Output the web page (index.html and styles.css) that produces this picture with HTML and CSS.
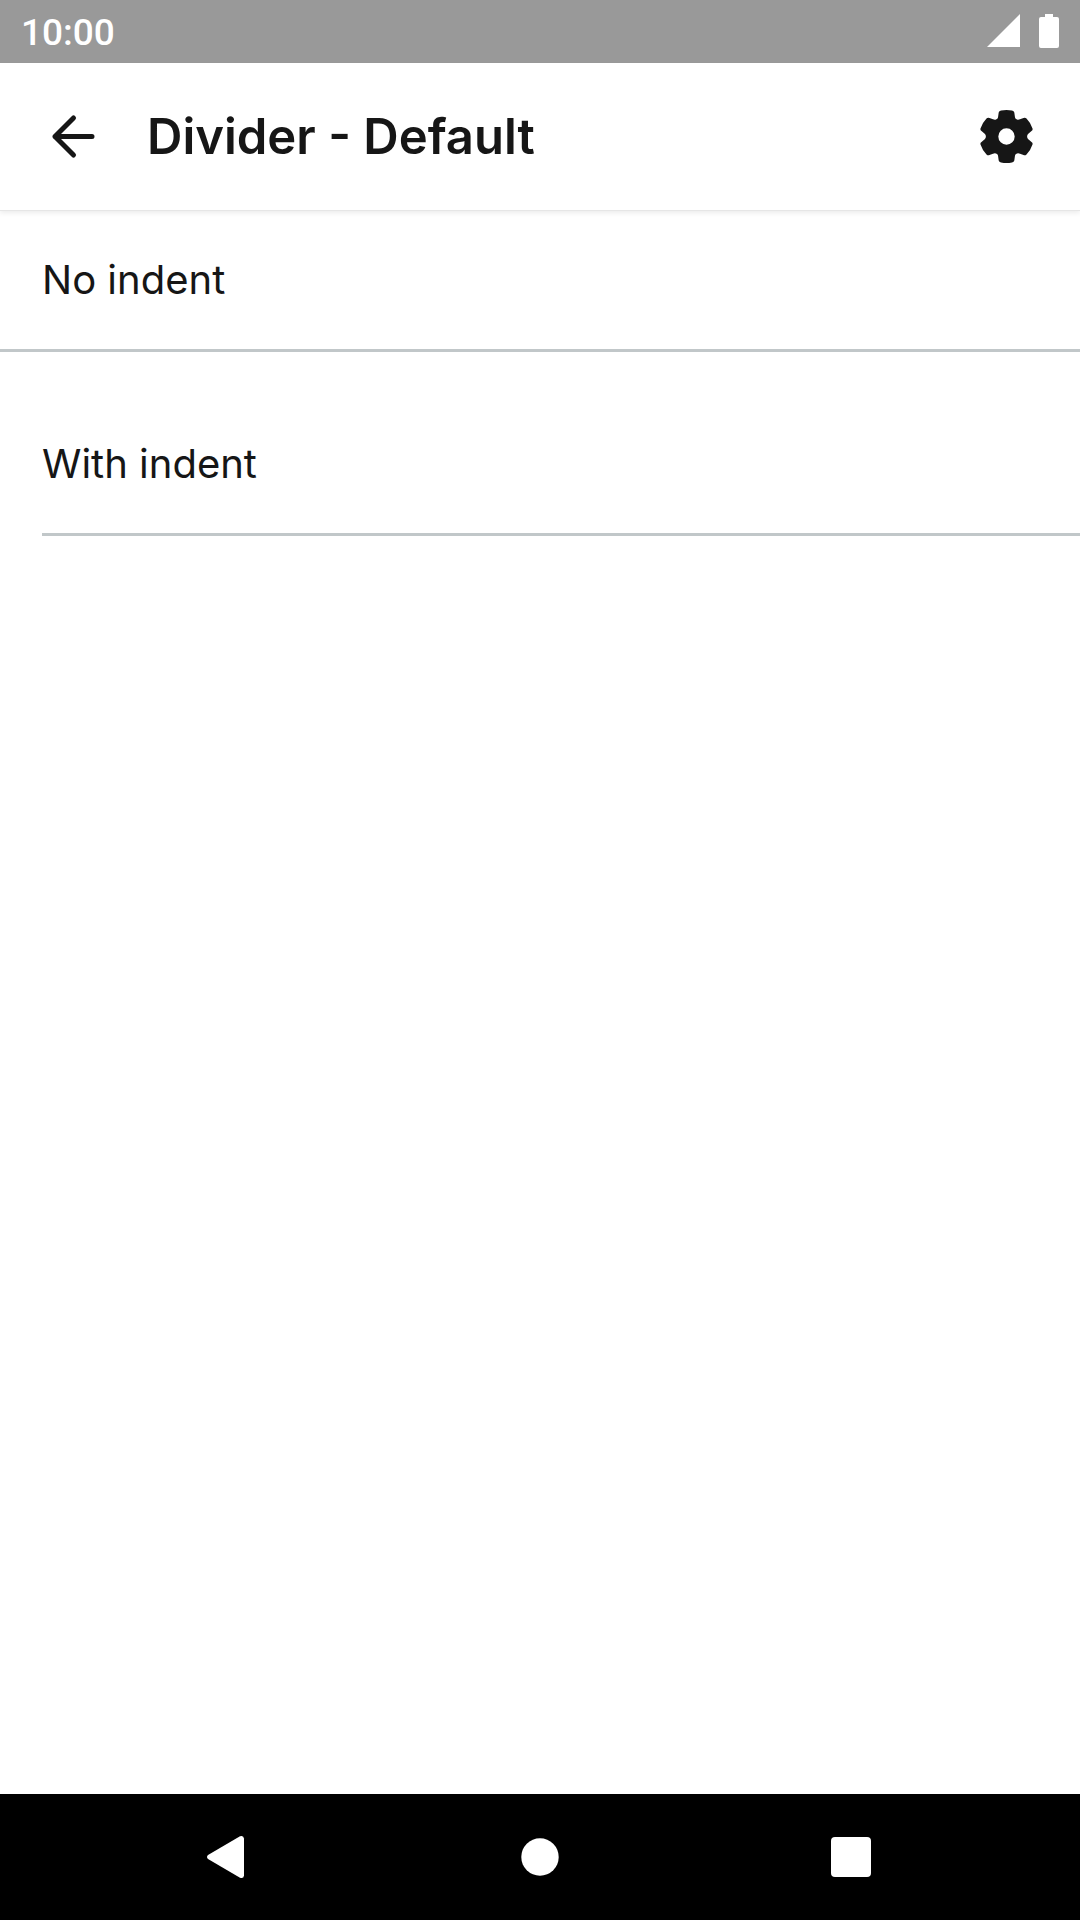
FILE: index.html
```html
<!DOCTYPE html>
<html lang="en">
<head>
<meta charset="utf-8">
<meta name="viewport" content="width=device-width, initial-scale=1">
<title>Divider - Default</title>
<link rel="stylesheet" href="styles.css">
</head>
<body>
<div class="screen">
  <div class="status-bar">
    <time class="clock">10:00</time>
    <div class="status-icons">
      <svg width="33" height="35" viewBox="0 0 33 35" aria-hidden="true"><path d="M33 0V33H0Z" fill="#fff"/></svg>
      <svg width="20" height="35" viewBox="0 0 20 35" aria-hidden="true"><path d="M6 0H14V3H18Q20 3 20 5V32Q20 34 18 34H2Q0 34 0 32V5Q0 3 2 3H6Z" fill="#fff"/></svg>
    </div>
  </div>
  <header class="app-bar">
    <button class="icon-button" type="button" aria-label="Back">
      <svg width="63" height="63" viewBox="0 0 63 63" aria-hidden="true"><path d="M50 31.500H13M31.500 13L13 31.500L31.500 50" fill="none" stroke="#161616" stroke-width="5" stroke-linecap="round" stroke-linejoin="round"/></svg>
    </button>
    <h1 class="title">Divider - Default</h1>
    <button class="icon-button" type="button" aria-label="Settings">
      <svg width="63" height="63" viewBox="0 0 63 63" aria-hidden="true"><path fill="#161616" fill-rule="evenodd" d="M26 5.500Q31.500 4.500 37 5.500Q39 5.800 39.300 7.500L40 12.500Q40.300 14 42 14.500Q43.500 15 45 14.200L48.500 12.900Q50.200 12.200 51.500 13.500Q55.500 17.500 57.500 23.500Q58 25 56.500 26L53 29Q51.200 31.500 53 34L56.500 37Q58 38 57.500 39.500Q55.500 45.500 51.500 49.500Q50.200 50.800 48.500 50.100L45 48.800Q43.500 48 42 48.500Q40.300 49 40 50.500L39.300 55.500Q39 57.200 37 57.500Q31.500 58.500 26 57.500Q24 57.200 23.700 55.500L23 50.500Q22.700 49 21 48.500Q19.500 48 18 48.800L14.500 50.100Q12.800 50.800 11.500 49.500Q7.500 45.500 5.500 39.500Q5 38 6.500 37L10 34Q11.800 31.500 10 29L6.500 26Q5 25 5.500 23.500Q7.500 17.500 11.500 13.500Q12.800 12.200 14.500 12.900L18 14.200Q19.500 15 21 14.500Q22.700 14 23 12.500L23.700 7.500Q24 5.800 26 5.500ZM31.500 23.300A8.200 8.200 0 1 0 31.500 39.700A8.200 8.200 0 1 0 31.500 23.300Z"/></svg>
    </button>
  </header>
  <main class="content">
    <section>
      <p class="label">No indent</p>
      <hr class="divider">
    </section>
    <section>
      <p class="label">With indent</p>
      <hr class="divider divider-indent">
    </section>
  </main>
  <nav class="nav-bar" aria-label="System">
    <button class="nav-button" type="button" aria-label="Back">
      <svg width="46" height="46" viewBox="0 0 46 46" aria-hidden="true"><path d="M2 21L34 2.300Q37.500 1 38 4.500V41.500Q37.500 45 34 43.700L2 25Q0 23 2 21Z" fill="#fff"/></svg>
    </button>
    <button class="nav-button" type="button" aria-label="Home">
      <svg width="46" height="46" viewBox="0 0 46 46" aria-hidden="true"><circle cx="23" cy="23" r="18.700" fill="#fff"/></svg>
    </button>
    <button class="nav-button" type="button" aria-label="Recent apps">
      <svg width="46" height="46" viewBox="0 0 46 46" aria-hidden="true"><rect x="3" y="3" width="40" height="40" rx="4" fill="#fff"/></svg>
    </button>
  </nav>
</div>
</body>
</html>
```

FILE: styles.css
```css
* {
  box-sizing: border-box;
}

body {
  margin: 0;
  background: #fff;
  color: #161616;
  font-family: Inter, "Liberation Sans", sans-serif;
}

button {
  padding: 0;
  border: 0;
  background: none;
}

svg {
  display: block;
}

.screen {
  display: flex;
  flex-direction: column;
  min-height: 100vh;
}

.status-bar {
  display: flex;
  align-items: center;
  justify-content: space-between;
  height: 63px;
  padding: 0 21px;
  background: #999;
}

.clock {
  padding-top: 3px;
  color: #fff;
  font: 500 37px/42px Roboto, sans-serif;
}

.status-icons {
  display: flex;
  gap: 19px;
}

.app-bar {
  display: flex;
  align-items: center;
  height: 147px;
  padding: 0 42px;
  box-shadow: 0 1px 0 #e6e6e6, 0 3px 5px rgba(0, 0, 0, 0.08);
}

.icon-button {
  flex: none;
}

.title {
  flex: 1;
  margin: 0;
  padding-left: 42px;
  font-size: 49px;
  font-weight: 600;
  line-height: 63px;
}

.content {
  display: flex;
  flex: 1;
  flex-direction: column;
  gap: 42px;
}

.label {
  margin: 0;
  padding: 42px;
  font-size: 40px;
  line-height: 55px;
}

.divider {
  height: 3px;
  margin: 0;
  border: 0;
  background: #c1c7c9;
}

.divider-indent {
  margin-left: 42px;
}

.nav-bar {
  display: grid;
  grid-template-columns: repeat(3, 1fr);
  height: 126px;
  padding: 0 73px;
  background: #000;
}

.nav-button {
  display: flex;
  align-items: center;
  justify-content: center;
}
```
